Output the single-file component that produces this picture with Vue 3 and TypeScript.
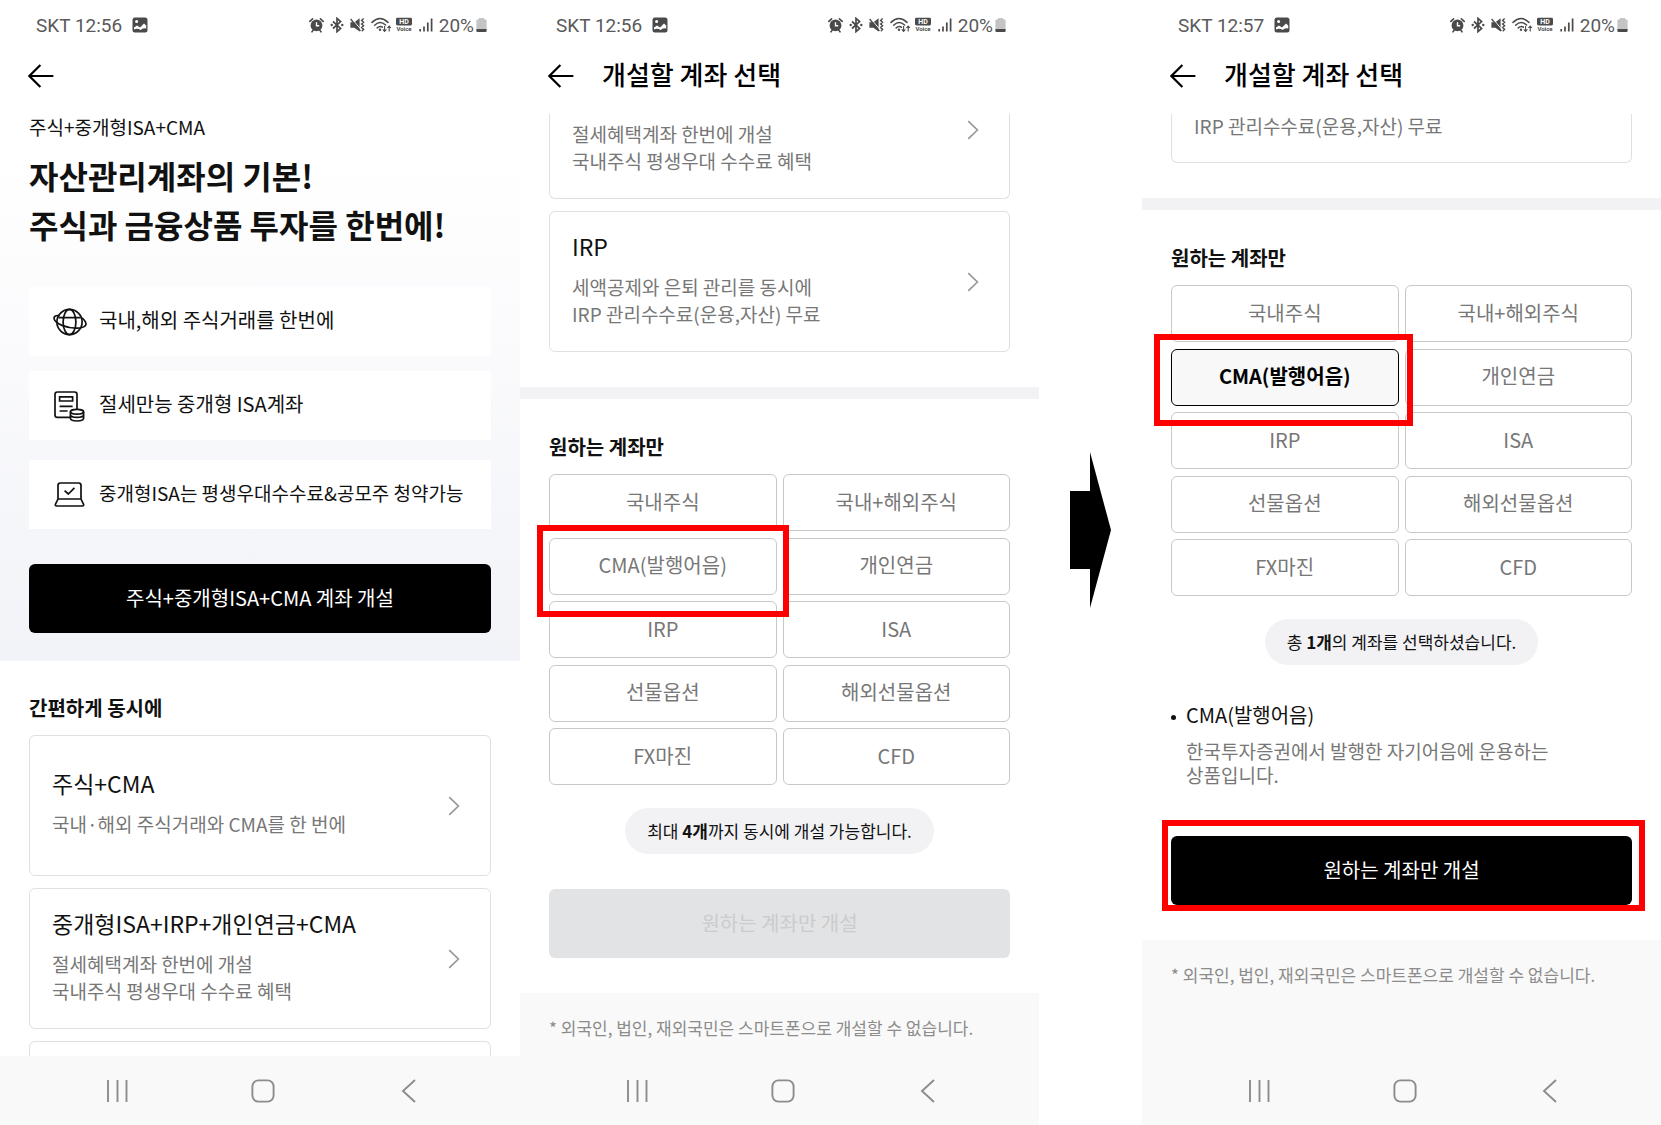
<script setup lang="ts">
import { ref } from 'vue'

interface Product {
  title: string
  lines: string[]
}

interface Screen {
  id: string
  time: string
  selected: string
  cut: string[]
  products: Product[]
  countLead: string
  count: string
  countTail: string
}

const target = 'CMA(발행어음)'
const accounts: string[] = [
  '국내주식', '국내+해외주식',
  target, '개인연금',
  'IRP', 'ISA',
  '선물옵션', '해외선물옵션',
  'FX마진', 'CFD',
]

const taxLines = ['절세혜택계좌 한번에 개설', '국내주식 평생우대 수수료 혜택']
const irpLines = ['세액공제와 은퇴 관리를 동시에', 'IRP 관리수수료(운용,자산) 무료']

// "cut" holds the lines of the card that is scrolled partly under the title bar
const screens = ref<Screen[]>([
  {
    id: 'intro', time: '12:56', selected: '', cut: [],
    products: [
      { title: '주식+CMA', lines: ['국내·해외 주식거래와 CMA를 한 번에'] },
      { title: '중개형ISA+IRP+개인연금+CMA', lines: taxLines },
    ],
    countLead: '', count: '', countTail: '',
  },
  {
    id: 'choose', time: '12:56', selected: '', cut: taxLines,
    products: [{ title: 'IRP', lines: irpLines }],
    countLead: '최대 ', count: '4개', countTail: '까지 동시에 개설 가능합니다.',
  },
  {
    id: 'chosen', time: '12:57', selected: target, cut: irpLines.slice(1),
    products: [],
    countLead: '총 ', count: '1개', countTail: '의 계좌를 선택하셨습니다.',
  },
])
</script>

<template>
  <main class="board">
    <template v-for="s in screens" :key="s.id">
      <div v-if="s.id === 'chosen'" class="step">
        <svg width="41" height="156" viewBox="0 0 41 156" aria-hidden="true">
          <path d="M0 39H20V0L41 78L20 156V117H0Z" fill="#000" />
        </svg>
      </div>

      <section class="phone">
        <div class="status">
          <span class="carrier">SKT {{ s.time }}</span>
          <svg class="shot" width="16" height="16" viewBox="0 0 16 16" aria-hidden="true">
            <rect x="0.5" y="0.5" width="15" height="15" rx="2.5" fill="#4a4a4a" />
            <circle cx="4.6" cy="4.6" r="1.5" fill="#fff" />
            <path d="M2 10.5L5 8.6L8 10.6L12 6.4L14.2 8.6V11.5Q11 10.4 8.6 13Q5.6 10.8 2 12.6Z" fill="#fff" />
          </svg>
          <div class="signals">
            <svg width="15" height="16" viewBox="0 0 15 16" aria-hidden="true">
              <circle cx="7.5" cy="8.4" r="5.9" fill="#4a4a4a" />
              <path d="M0.8 4.4L3.6 1.8M14.2 4.4L11.4 1.8M3 14.8L4.6 12.6M12 14.8L10.4 12.6" stroke="#4a4a4a" stroke-width="1.6" stroke-linecap="round" />
              <path d="M7.5 5.2V8.8H10.2" fill="none" stroke="#fff" stroke-width="1.4" />
            </svg>
            <svg width="14" height="16" viewBox="0 0 14 16" aria-hidden="true">
              <path d="M3 4.5L10.6 11.4L7 14.6V1.4L10.6 4.6L3 11.5" fill="none" stroke="#4a4a4a" stroke-width="1.7" />
              <circle cx="1.7" cy="8" r="1.2" fill="#4a4a4a" />
              <circle cx="12.3" cy="8" r="1.2" fill="#4a4a4a" />
            </svg>
            <svg width="15" height="16" viewBox="0 0 15 16" aria-hidden="true">
              <path d="M0.4 5.2H4.4L9.6 1.2V14.6L4.4 10.8H0.4Z" fill="#4a4a4a" />
              <path d="M1.6 1.4L10.6 12.2" stroke="#fff" stroke-width="1" />
              <path d="M0.6 2L10.4 14" stroke="#4a4a4a" stroke-width="1.3" />
              <path d="M13.6 1.6L11.6 3.4L13.6 5.2L11.6 7L13.6 8.8L11.6 10.6L13.6 12.4L11.8 14.2" fill="none" stroke="#4a4a4a" stroke-width="1.4" />
            </svg>
            <svg class="wifi" width="21" height="16" viewBox="0 0 21 16" aria-hidden="true">
              <g fill="none" stroke="#4a4a4a" stroke-width="1.5" stroke-linecap="round">
                <path d="M1 5.4Q9 -2.4 17 5.4" />
                <path d="M3.7 8.2Q9 3 14.6 8" />
                <path d="M6.2 10.9Q9 8.4 11.4 10.2" />
              </g>
              <circle cx="9" cy="12.8" r="1.2" fill="#4a4a4a" />
              <path d="M13.6 9V14M11.8 12.4L13.6 14.4L15.4 12.4M18.2 14.4V9.2M16.4 11L18.2 9L20 11" fill="none" stroke="#4a4a4a" stroke-width="1.1" />
            </svg>
            <svg class="hd" width="18" height="16" viewBox="0 0 18 16" aria-hidden="true">
              <rect x="1" y="0.8" width="16" height="7.6" rx="1.4" fill="#4a4a4a" />
              <text x="9" y="7.2" text-anchor="middle" font-size="7" fill="#fff">HD</text>
              <text x="9" y="14.4" text-anchor="middle" font-size="6" fill="#4a4a4a">Voice</text>
            </svg>
            <svg width="14" height="16" viewBox="0 0 14 16" aria-hidden="true">
              <path d="M1.2 12V14.6M5 9.4V14.6M8.8 5.6V14.6M12.6 1.4V14.6" stroke="#4a4a4a" stroke-width="1.7" />
            </svg>
            <span class="charge">20%</span>
            <svg class="battery" width="11" height="16" viewBox="0 0 11 16" aria-hidden="true">
              <path d="M3 2V1H8V2L10.6 3V13H0.4V3Z" fill="#c4c4c4" />
              <path d="M0.4 12H10.6V14Q10.6 15 9.6 15H1.4Q0.4 15 0.4 14Z" fill="#4a4a4a" />
            </svg>
          </div>
        </div>

        <header class="bar">
          <button type="button" class="back" aria-label="뒤로">
            <svg width="26" height="24" viewBox="0 0 26 24" aria-hidden="true">
              <path d="M12.4 1L1.4 12L12.4 23M1.4 12H25.4" fill="none" stroke="#000" stroke-width="2.2" />
            </svg>
          </button>
          <h2 v-if="s.id !== 'intro'" class="bar-title">개설할 계좌 선택</h2>
        </header>

        <div class="view">
          <div v-if="s.id === 'intro'" class="hero">
            <p class="kicker">주식+중개형ISA+CMA</p>
            <h1 class="headline">자산관리계좌의 기본!<br />주식과 금융상품 투자를 한번에!</h1>
            <ul class="features">
              <li class="feature">
                <svg width="34" height="32" viewBox="0 0 34 32" fill="none" stroke="#111" stroke-width="1.7" aria-hidden="true">
                  <circle cx="16.5" cy="16" r="12.6" />
                  <ellipse cx="16.5" cy="16" rx="6.4" ry="12.6" />
                  <path d="M6.6 9.6Q1.4 9 1 12Q1 16 9 19.4Q18 23 26.6 22Q33 21 33 18Q32.6 14.4 28.4 11.6M5.6 11.6H27.6" />
                </svg>
                <span>국내,해외 주식거래를 한번에</span>
              </li>
              <li class="feature">
                <svg width="34" height="32" viewBox="0 0 34 32" fill="none" stroke="#111" stroke-width="1.7" aria-hidden="true">
                  <path d="M17 27.4H4.4Q2 27.4 2 25V4.4Q2 2 4.4 2H21.6Q24 2 24 4.4V19" />
                  <path d="M6.6 6.8H19.6V11H6.6ZM6.6 16.4H19.6M6.6 21H14.6" />
                  <ellipse cx="24" cy="21.8" rx="6.6" ry="2.4" />
                  <path d="M17.4 21.8V28.4Q18 31 24 31Q30 31 30.6 28.4V21.8M17.4 25Q18 27.4 24 27.4Q30 27.4 30.6 25" />
                </svg>
                <span>절세만능 중개형 ISA계좌</span>
              </li>
              <li class="feature small">
                <svg width="34" height="32" viewBox="0 0 34 32" fill="none" stroke="#111" stroke-width="1.7" stroke-linejoin="round" aria-hidden="true">
                  <path d="M5 20V6.4Q5 4 7.4 4H25.6Q28 4 28 6.4V20M5 20H28L30.6 25.4Q31 27 29.4 27H3.6Q2 27 2.4 25.4ZM11.6 11.6L15.4 15L21.4 8.8" />
                </svg>
                <span>중개형ISA는 평생우대수수료&amp;공모주 청약가능</span>
              </li>
            </ul>
            <button type="button" class="cta">주식+중개형ISA+CMA 계좌 개설</button>
          </div>

          <div class="bundles" :class="s.id">
            <h3 v-if="s.id === 'intro'" class="section-title">간편하게 동시에</h3>
            <ul class="cards">
              <li v-if="s.cut.length">
                <a href="#" class="card cut-top">
                  <span class="card-text">
                    <span v-for="line in s.cut" :key="line" class="card-line">{{ line }}</span>
                  </span>
                  <svg v-if="s.cut.length > 1" width="12" height="20" viewBox="0 0 12 20" aria-hidden="true">
                    <path d="M1.2 1.2L10.4 10L1.2 18.8" fill="none" stroke="#999" stroke-width="1.7" />
                  </svg>
                </a>
              </li>
              <li v-for="p in s.products" :key="p.title">
                <a href="#" class="card">
                  <span class="card-text">
                    <span class="card-title">{{ p.title }}</span>
                    <span v-for="line in p.lines" :key="line" class="card-line">{{ line }}</span>
                  </span>
                  <svg width="12" height="20" viewBox="0 0 12 20" aria-hidden="true">
                    <path d="M1.2 1.2L10.4 10L1.2 18.8" fill="none" stroke="#999" stroke-width="1.7" />
                  </svg>
                </a>
              </li>
              <li v-if="s.id === 'intro'" class="cut-bottom"></li>
            </ul>
          </div>

          <template v-if="s.id !== 'intro'">
            <div class="picker">
              <h3 class="section-title">원하는 계좌만</h3>
              <ul class="grid">
                <li v-for="a in accounts" :key="a" class="cell">
                  <button type="button" class="choice" :class="{ on: a === s.selected }" :aria-pressed="a === s.selected">{{ a }}</button>
                  <span v-if="a === target" class="mark" :class="s.id"></span>
                </li>
              </ul>
              <p class="pill">{{ s.countLead }}<b>{{ s.count }}</b>{{ s.countTail }}</p>
              <div v-if="s.selected" class="detail">
                <h4 class="detail-title">{{ s.selected }}</h4>
                <p class="detail-text">한국투자증권에서 발행한 자기어음에 운용하는<br />상품입니다.</p>
              </div>
              <div class="submit">
                <button type="button" class="cta" :disabled="!s.selected">원하는 계좌만 개설</button>
                <span v-if="s.selected" class="mark action"></span>
              </div>
            </div>
            <p class="footnote">* 외국인, 법인, 재외국민은 스마트폰으로 개설할 수 없습니다.</p>
          </template>
        </div>

        <nav class="keys">
          <button type="button" aria-label="최근 앱">
            <svg width="24" height="24" viewBox="0 0 24 24" aria-hidden="true">
              <path d="M2 1V23M11.5 1V23M20.5 1V23" stroke="#8c8c8c" stroke-width="1.9" />
            </svg>
          </button>
          <button type="button" aria-label="홈">
            <svg width="24" height="24" viewBox="0 0 24 24" aria-hidden="true">
              <rect x="1.4" y="1.4" width="21.2" height="21.2" rx="6" fill="none" stroke="#8c8c8c" stroke-width="1.9" />
            </svg>
          </button>
          <button type="button" aria-label="이전">
            <svg width="24" height="24" viewBox="0 0 24 24" aria-hidden="true">
              <path d="M18 1L6 12L18 23" fill="none" stroke="#8c8c8c" stroke-width="1.9" />
            </svg>
          </button>
        </nav>
      </section>
    </template>
  </main>
</template>

<style>
body {
  margin: 0;
  background: #fff;
}
</style>

<style scoped>
.board {
  display: grid;
  grid-template-columns: 520fr 519fr 103fr 519fr;
  min-height: 100vh;
  font-family: "Noto Sans CJK KR", sans-serif;
  color: #111;
}
.board h1, .board h2, .board h3, .board h4, .board p, .board ul {
  margin: 0;
  padding: 0;
}
ul {
  list-style: none;
}
button {
  font-family: inherit;
  cursor: pointer;
}
svg {
  display: block;
  flex: none;
}
.step {
  display: flex;
  align-items: center;
  justify-content: center;
  padding-bottom: 66px;
}
.phone {
  display: flex;
  flex-direction: column;
  min-width: 0;
  background: #fff;
}

.status {
  display: flex;
  align-items: center;
  flex: none;
  height: 50px;
  padding: 0 33px 0 36px;
  font-family: Roboto, sans-serif;
  font-size: 19px;
  color: #5a5a5a;
}
.shot {
  margin-left: 10px;
}
.signals {
  display: flex;
  align-items: center;
  gap: 6px;
  margin-left: auto;
}
.wifi {
  margin-right: -3px;
}
.hd {
  font-family: Roboto, sans-serif;
  font-weight: 700;
}
.battery {
  margin-left: -4px;
}

.bar {
  display: flex;
  align-items: center;
  gap: 28px;
  flex: none;
  height: 52px;
  padding: 0 28px 12px;
}
.back {
  padding: 0;
  border: 0;
  background: none;
}
.board .bar-title {
  padding-bottom: 4px;
  font-size: 26px;
  line-height: 38px;
  font-weight: 500;
  color: #000;
}

.view {
  display: flex;
  flex-direction: column;
  flex: 1;
}

.hero {
  padding: 0 29px 28px;
  background: linear-gradient(#fff 0, #fff 40px, #f2f3f8 100%);
}
.kicker {
  font-size: 19px;
  line-height: 25px;
}
.board .headline {
  margin-top: 12px;
  font-size: 32px;
  line-height: 49px;
  font-weight: 700;
}
.board .features {
  padding: 38px 0 35px;
}
.feature {
  display: flex;
  align-items: center;
  gap: 12px;
  height: 69px;
  padding: 0 24px;
  background: #fff;
  font-size: 20px;
  white-space: nowrap;
}
.feature span {
  padding-bottom: 4px;
}
.feature + .feature {
  margin-top: 15px;
}
.feature + .small {
  margin-top: 20px;
  font-size: 19px;
}
.cta {
  display: block;
  width: 100%;
  height: 69px;
  padding: 0 0 2px;
  border: 0;
  border-radius: 6px;
  background: #000;
  color: #fff;
  font-size: 20px;
}
.cta:disabled {
  background: #e2e3e4;
  color: #cbcccd;
}

.bundles {
  padding: 0 29px 35px;
}
.bundles.intro {
  display: flex;
  flex-direction: column;
  flex: 1;
  padding: 32px 29px 0;
}
.section-title {
  font-size: 20px;
  line-height: 30px;
  font-weight: 700;
}
.board .section-title + .cards {
  flex: 1;
  margin-top: 12px;
}
.cards {
  display: flex;
  flex-direction: column;
  gap: 12px;
}
.card {
  display: flex;
  align-items: center;
  justify-content: space-between;
  box-sizing: border-box;
  height: 141px;
  padding: 0 30px 0 22px;
  border: 1px solid #e0e0e0;
  border-radius: 6px;
  color: inherit;
  text-decoration: none;
}
.card-text {
  display: flex;
  flex-direction: column;
  padding-bottom: 8px;
}
.card-title {
  margin-bottom: 10px;
  font-size: 23px;
  line-height: 34px;
}
.card-line {
  font-size: 19px;
  line-height: 27px;
  color: #777;
}
.card.cut-top {
  align-items: flex-start;
  height: 85px;
  padding-top: 6px;
  border-top: 0;
  border-radius: 0 0 6px 6px;
}
.chosen .card.cut-top {
  height: 49px;
  padding-top: 0;
}
.chosen .card-line {
  line-height: 23px;
}
.cut-bottom {
  flex: 1;
  min-height: 12px;
  border: 1px solid #e0e0e0;
  border-bottom: 0;
  border-radius: 6px 6px 0 0;
}

.picker {
  padding: 33px 29px 35px;
  border-top: 12px solid #f2f2f5;
}
.board .grid {
  display: grid;
  grid-template-columns: 1fr 1fr;
  grid-auto-rows: 57px;
  align-content: space-between;
  column-gap: 6px;
  height: 311px;
  margin-top: 12px;
}
.cell {
  position: relative;
}
.choice {
  width: 100%;
  height: 100%;
  padding: 0 0 3px;
  border: 1px solid #c8c8c8;
  border-radius: 6px;
  background: #fff;
  color: #777;
  font-size: 20px;
}
.choice.on {
  border-color: #000;
  background: #f8f8f8;
  color: #000;
  font-weight: 700;
}
.mark {
  position: absolute;
  z-index: 1;
  border: 6px solid #f00;
  pointer-events: none;
}
.mark.choose {
  inset: -13px -12px -22px;
}
.mark.chosen {
  inset: -15px -14px -20px -17px;
}
.mark.action {
  inset: -16px -13px -6px -9px;
}
.board .pill {
  width: fit-content;
  margin: 23px auto 0;
  padding: 0 22px;
  border-radius: 23px;
  background: #f2f2f5;
  font-size: 17px;
  line-height: 46px;
}
.detail {
  margin-top: 35px;
  margin-bottom: 48px;
  padding-left: 15px;
}
.detail-title {
  position: relative;
  font-size: 20px;
  line-height: 30px;
  font-weight: 400;
}
.detail-title::before {
  content: "";
  position: absolute;
  top: 15px;
  left: -15px;
  width: 5px;
  height: 5px;
  border-radius: 50%;
  background: #111;
}
.board .detail-text {
  margin-top: 9px;
  padding-bottom: 1px;
  font-size: 19px;
  line-height: 24px;
  color: #777;
}
.submit {
  position: relative;
}
.pill + .submit {
  margin-top: 35px;
}
.board .footnote {
  flex: 1;
  padding: 21px 29px 14px;
  background: #f9f9f9;
  font-size: 17px;
  line-height: 27px;
  color: #8c8c8c;
}

.keys {
  display: grid;
  grid-template-columns: 1fr 1fr 1fr;
  flex: none;
  height: 69px;
  padding: 0 38px 0 45px;
  background: #f9f9f9;
}
.keys button {
  display: flex;
  align-items: center;
  justify-content: center;
  padding: 0;
  border: 0;
  background: none;
}
</style>
